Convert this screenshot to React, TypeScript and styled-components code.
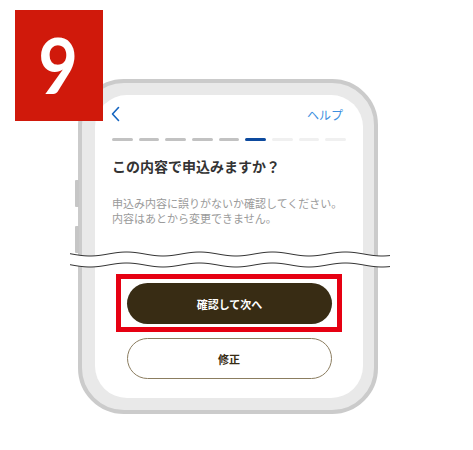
import React from "react";
import styled, { createGlobalStyle } from "styled-components";

const GlobalStyle = createGlobalStyle`
    body {
        margin: 0;
        background: #fff;
        font-family: "Noto Sans CJK JP", "Noto Sans", sans-serif;
    }
`;

const Stage = styled.div`
    position: relative;
    width: 473px;
    height: 450px;
    box-sizing: border-box;
    padding: 79px 0 0 78px;
    overflow: hidden;
`;

const StepBadge = styled.div`
    position: absolute;
    left: 15px;
    top: 10px;
    width: 88px;
    height: 111px;
    background: #d0190b;
    color: #fff;
    display: flex;
    align-items: center;
    justify-content: center;
    font-family: Lato, "Liberation Sans", sans-serif;
    font-weight: 700;
    font-size: 76px;
    line-height: 1;
    z-index: 3;
`;

const Digit = styled.span`
    display: inline-block;
    transform: scaleX(0.9) translate(-1px, -1px);
`;

const Phone = styled.div`
    position: relative;
    width: 300px;
    height: 335px;
    box-sizing: border-box;
    border: 4px solid #cbcbcb;
    background: #e9e9e9;
    border-radius: 46px;
    padding: 12px 11px 12px 13px;
`;

const SideKey = styled.div<{ top: number }>`
    position: absolute;
    left: -7px;
    top: ${({ top }) => top}px;
    width: 4px;
    height: 27px;
    background: #c6c6c6;
    border-radius: 1px;
`;

const Screen = styled.div`
    height: 100%;
    box-sizing: border-box;
    background: #fff;
    border-radius: 32px;
    padding: 9px 17px 0;
    display: flex;
    flex-direction: column;
`;

const Header = styled.div`
    height: 20px;
    display: flex;
    align-items: center;
    justify-content: space-between;
`;

const BackButton = styled.span`
    display: flex;
    width: 9px;
    height: 16px;
    margin-left: -1px;
`;

const HelpLink = styled.span`
    font-size: 12px;
    color: #3d8fe0;
    margin-right: 3px;
`;

const Progress = styled.div`
    display: flex;
    gap: 6px;
    margin-top: 14px;
`;

const Segment = styled.div<{ state: "done" | "current" | "todo" }>`
    flex: 1;
    height: 3px;
    border-radius: 2px;
    background: ${({ state }) =>
        state === "done" ? "#c2c2c2" : state === "current" ? "#0d4a9e" : "#f0f0f0"};
`;

const Title = styled.h1`
    margin: 15px 0 0;
    font-size: 14px;
    line-height: 20px;
    font-weight: 700;
    color: #333;
`;

const Description = styled.p`
    margin: 20px 0 0;
    font-size: 11px;
    line-height: 15px;
    color: #9a9a9a;
`;

const Actions = styled.div`
    margin-top: 48px;
    display: flex;
    flex-direction: column;
    align-items: center;
    gap: 6px;
`;

const Highlight = styled.div`
    width: 226px;
    box-sizing: border-box;
    border: 5px solid #e60012;
    padding: 4px 5px 3px 6px;
`;

const PillButton = styled.button<{ primary?: boolean }>`
    display: block;
    width: 205px;
    height: 41px;
    border-radius: 21px;
    box-sizing: border-box;
    font-family: inherit;
    font-size: 11px;
    font-weight: 700;
    cursor: pointer;
    background: ${({ primary }) => (primary ? "#382c14" : "#fff")};
    color: ${({ primary }) => (primary ? "#fff" : "#382c14")};
    border: ${({ primary }) => (primary ? "none" : "1.5px solid #8b7d60")};
`;

const WaveCut = styled.svg`
    position: absolute;
    left: 70px;
    top: 248px;
    width: 320px;
    height: 24px;
    z-index: 2;
`;

const wavePoints = (cy: number, w: number) => {
    const pts: string[] = [];
    for (let x = 0; x <= w; x += 2) {
        const y = cy + 2 * Math.cos(((x - 20) * 2 * Math.PI) / 73);
        pts.push(`${x},${y.toFixed(2)}`);
    }
    return pts;
};

const steps: Array<"done" | "current" | "todo"> = [
    "done", "done", "done", "done", "done", "current", "todo", "todo", "todo",
];

export default function App() {
    const top = wavePoints(6, 320);
    const bottom = wavePoints(17, 320);
    const band = `M${top.join(" L")} L${[...bottom].reverse().join(" L")} Z`;

    return (
        <>
            <GlobalStyle />
            <Stage>
                <StepBadge>
                    <Digit>9</Digit>
                </StepBadge>
                <Phone>
                    <SideKey top={97} />
                    <SideKey top={143} />
                    <Screen>
                        <Header>
                            <BackButton>
                                <svg viewBox="0 0 9 16" width="9" height="16">
                                    <path d="M7.5 1.5 L1.5 8 L7.5 14.5" fill="none" stroke="#1565c0" strokeWidth="1.6" strokeLinecap="round" strokeLinejoin="round" />
                                </svg>
                            </BackButton>
                            <HelpLink>ヘルプ</HelpLink>
                        </Header>
                        <Progress>
                            {steps.map((s, i) => (
                                <Segment key={i} state={s} />
                            ))}
                        </Progress>
                        <Title>この内容で申込みますか？</Title>
                        <Description>
                            申込み内容に誤りがないか確認してください。
                            <br />
                            内容はあとから変更できません。
                        </Description>
                        <Actions>
                            <Highlight>
                                <PillButton primary>確認して次へ</PillButton>
                            </Highlight>
                            <PillButton>修正</PillButton>
                        </Actions>
                    </Screen>
                </Phone>
                <WaveCut viewBox="0 0 320 24">
                    <path d={band} fill="#fff" />
                    <path d={`M${top.join(" L")}`} fill="none" stroke="#333" strokeWidth="1" />
                    <path d={`M${bottom.join(" L")}`} fill="none" stroke="#333" strokeWidth="1" />
                </WaveCut>
            </Stage>
        </>
    );
}
